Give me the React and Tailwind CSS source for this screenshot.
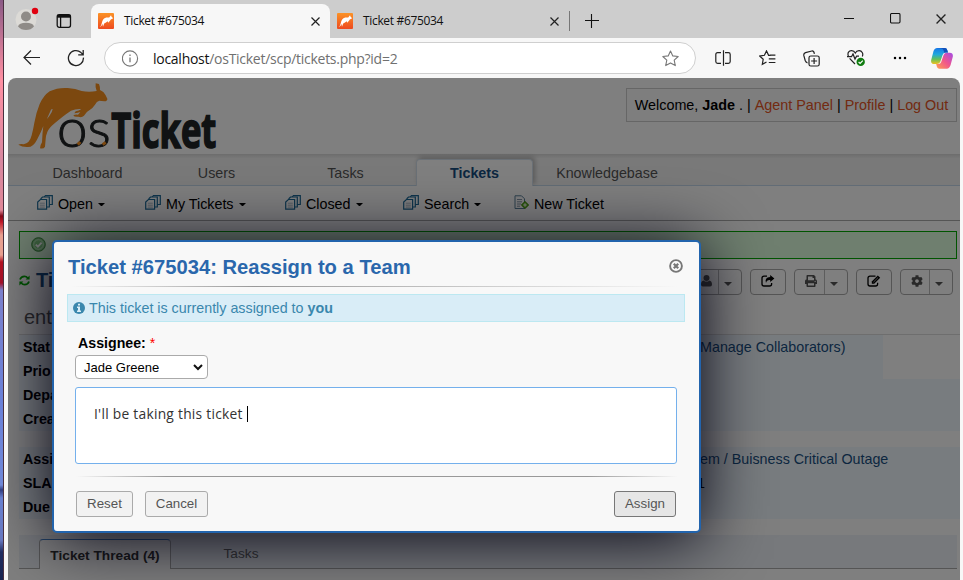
import React from "react";
import { FaPrint, FaCog } from "react-icons/fa";

const NAV = [
  { label: "Dashboard", box: "w-[129px]" },
  { label: "Users", box: "w-[129px]" },
  { label: "Tasks", box: "w-[129px]" },
  { label: "Tickets", box: "w-[117px] mx-1.5", active: true },
  { label: "Knowledgebase", box: "w-[136px]" },
];

function Favicon() {
  return (
    <svg width="16" height="16" viewBox="0 0 16 16" className="shrink-0">
      <defs>
        <linearGradient id="fav" x1="0" y1="0" x2="0" y2="1">
          <stop offset="0" stopColor="#fb9226" />
          <stop offset="1" stopColor="#ee4a20" />
        </linearGradient>
      </defs>
      <rect width="16" height="16" rx="1" fill="url(#fav)" />
      <path d="M1.6 13.8C4 13 3.4 9 5.2 6.5C6.8 4.2 9 4.2 11.2 4.6L13 2.2L13.6 3.8L15.2 5.2L12.8 6.4C12 7.8 11 8.4 10.4 9.8L9.6 8.2L8 9.6L6.2 10.6L5 13.8L4.4 10.8C4 12.5 3 13.8 1.6 13.8Z" fill="#fff" />
    </svg>
  );
}

function CloseX({ size = 9 }) {
  return (
    <svg width={size} height={size} viewBox="0 0 9 9" stroke="#222" strokeWidth="1.2">
      <path d="M.5 .5L8.5 8.5M8.5 .5L.5 8.5" />
    </svg>
  );
}

function Caret({ className }) {
  return (
    <svg width="8" height="4" viewBox="0 0 8 4" className={className} fill="currentColor"><path d="M0 0H8L4 4Z" /></svg>
  );
}

function TabBar() {
  return (
    <div className="flex h-[38px] shrink-0 items-end bg-[#cdcdcd]">
      <div className="flex h-[38px] w-[87px] shrink-0 items-center">
        <svg width="24" height="24" viewBox="0 0 24 24" className="ml-[11px]">
          <circle cx="11" cy="12.5" r="10.5" fill="#dcdad6" />
          <circle cx="11" cy="9.5" r="5" fill="#8f8b87" />
          <path d="M3 19.5Q4 15.8 11 15.8Q18 15.8 19 19.5Q16 23 11 23Q6 23 3 19.5Z" fill="#8f8b87" />
          <circle cx="20" cy="4" r="3.2" fill="#e0000f" />
        </svg>
        <svg width="16" height="16" viewBox="0 0 16 16" className="ml-[17px] mt-1" fill="none" stroke="#111" strokeWidth="1.3">
          <rect x="1.2" y="1.7" width="13.3" height="12.6" rx="2" />
          <path d="M1.2 3.2H14.5" strokeWidth="3" />
          <path d="M4.6 4V14" />
        </svg>
      </div>
      <div className="flex h-[34px] w-[239px] shrink-0 items-center rounded-t-lg bg-[#f7f7f7] pl-[7px] pr-2.5">
        <Favicon />
        <span className="ml-2.5 grow whitespace-nowrap text-[12px] tracking-[-0.33px] text-[#111]">Ticket #675034</span>
        <CloseX />
      </div>
      <div className="flex h-[34px] w-[239px] shrink-0 items-center pl-[7px] pr-2.5">
        <Favicon />
        <span className="ml-2.5 grow whitespace-nowrap text-[12px] tracking-[-0.33px] text-[#111]">Ticket #675034</span>
        <CloseX />
      </div>
      <div className="mb-[7px] h-5 w-px bg-[#777]" />
      <svg width="14" height="14" viewBox="0 0 14 14" className="mb-[10px] ml-[15px]" stroke="#111" strokeWidth="1.1">
        <path d="M0 6.5H14M6.5 0V14" />
      </svg>
      <div className="mb-[14px] ml-auto mr-[17px] flex items-center">
        <svg width="10" height="11" viewBox="0 0 10 11"><path d="M0 5.5H10" stroke="#111" /></svg>
        <svg width="11" height="11" viewBox="0 0 11 11" className="ml-9"><rect x=".5" y=".5" width="9.5" height="9.5" rx="1.2" fill="none" stroke="#111" strokeWidth="1.1" /></svg>
        <span className="ml-[35px]"><CloseX size={10} /></span>
      </div>
    </div>
  );
}

function AddressBar() {
  return (
    <div className="flex h-10 shrink-0 items-center bg-[#f7f7f7] pl-[19px]">
      <svg width="17" height="16" viewBox="0 0 17 16" fill="none" stroke="#222" strokeWidth="1.2">
        <path d="M17 7.5H1.2M8 .5L1 7.5L8 14.5" />
      </svg>
      <svg width="18" height="18" viewBox="0 0 18 18" className="ml-[27px]" fill="none" stroke="#222" strokeWidth="1.3">
        <path d="M16.4 8.6A7.5 7.5 0 1 1 14 3.6L16 5.6M16.2 1V5.9H11.2" />
      </svg>
      <div className="ml-[19px] flex h-8 w-[592px] items-center rounded-full border border-[#cfcfcf] bg-white pl-[17px] pr-4">
        <svg width="17" height="17" viewBox="0 0 17 17" fill="none" stroke="#777" strokeWidth="1.1">
          <circle cx="8" cy="8.5" r="7.6" />
          <path d="M8 7.5V12.2M8 4.5V6" strokeWidth="1.3" />
        </svg>
        <span className="ml-[14px] grow whitespace-nowrap text-[14px] tracking-[-0.27px] text-[#707070]">
          <span className="text-[#111]">localhost</span>/osTicket/scp/tickets.php?id=2
        </span>
        <svg width="17" height="17" viewBox="0 0 17 17" fill="none" stroke="#777" strokeWidth="1.1" strokeLinejoin="round">
          <path d="M8.5 1L10.8 5.9L16.2 6.5L12.2 10.2L13.3 15.6L8.5 12.9L3.7 15.6L4.8 10.2L.8 6.5L6.2 5.9Z" />
        </svg>
      </div>
      <svg width="16" height="16" viewBox="0 0 16 16" className="ml-[19px]" fill="none" stroke="#222" strokeWidth="1.2">
        <path d="M6 2.6H2.6Q.8 2.6 .8 4.4V11.6Q.8 13.4 2.6 13.4H6M10 2.6H13.4Q15.2 2.6 15.2 4.4V11.6Q15.2 13.4 13.4 13.4H10M8.5 .3V15.7" />
      </svg>
      <svg width="17" height="16" viewBox="0 0 17 16" className="ml-7" fill="none" stroke="#222" strokeWidth="1.2">
        <path d="M11.5 5.3H9.6L7.5 .9L5.4 5.3L.7 6L4.2 9.3L3.3 14.3L7.5 12M10.8 5.2H16.4M9.8 8.9H16.4M9.8 12.5H16.4" />
      </svg>
      <svg width="17" height="17" viewBox="0 0 17 17" className="ml-[27px]" fill="none" stroke="#222" strokeWidth="1.2">
        <rect x="6" y="6" width="10.2" height="10" rx="1.8" />
        <path d="M11.1 8V14M8.1 11H14.1M4.5 12.8Q2.8 12.5 2.2 10.5L.8 5.4Q.5 3.2 2.5 2.6L8.8 1Q10.8.7 11.4 3.8" />
      </svg>
      <svg width="18" height="18" viewBox="0 0 18 18" className="ml-[27px]" fill="none" stroke="#222" strokeWidth="1.2">
        <path d="M1.6 7.7C-.2 3.8 2.2 1.5 4.6 1.6C6.6 1.7 7.8 3 8.3 4C8.9 2.8 10.4 1.6 12.3 1.7C14.7 1.9 16.7 4.5 15.3 7.4M0 7.7H4.5L6 5L8 10L9.6 7.2H12M2.6 9.4L8 15" />
        <circle cx="13.7" cy="12.9" r="4.2" fill="#107c10" stroke="none" />
        <path d="M11.6 13L13.1 14.4L15.8 11.6" stroke="#fff" />
      </svg>
      <svg width="14" height="4" viewBox="0 0 14 4" className="ml-7"><circle cx="2" cy="2" r="1.25" /><circle cx="7" cy="2" r="1.25" /><circle cx="12" cy="2" r="1.25" /></svg>
      <svg width="22" height="21" viewBox="0 0 22 21" className="ml-6">
        <defs>
          <linearGradient id="cpa" x1="0" y1="0" x2="0" y2="1">
            <stop offset="0" stopColor="#1877e8" /><stop offset=".4" stopColor="#20a8dc" /><stop offset=".7" stopColor="#62c05a" /><stop offset="1" stopColor="#f0c020" />
          </linearGradient>
          <linearGradient id="cpb" x1="1" y1="0" x2="0" y2="1">
            <stop offset="0" stopColor="#a24be8" /><stop offset=".5" stopColor="#f0568c" /><stop offset="1" stopColor="#ffa050" />
          </linearGradient>
        </defs>
        <path d="M6.2 0H14Q15.7 0 16.2 2L17 4.6H14.5Q12.3 4.8 11.6 7L9.2 14Q8.2 16 6 16H3.2Q-.5 16 .2 12L2.4 3.6Q3.4 .2 6.2 0Z" fill="url(#cpa)" />
        <path d="M15.8 20.8H8Q6.3 20.6 5.8 18.6L5.2 16H7.5Q9.5 15.8 10.2 14L12.6 7Q13.5 4.7 15.8 4.7H18.8Q22.4 4.8 21.8 8.8L19.6 17Q18.4 20.6 15.8 20.8Z" fill="url(#cpb)" />
        <path d="M6.2 0H14Q15.7 0 16.2 2L17 4.6H14.5L13.6 4.9L12.4 1.9Q11.8 .2 9.5 .2Z" fill="#1450b8" />
      </svg>
    </div>
  );
}

function Logo() {
  return (
    <svg width="200" height="69" viewBox="50 18 600 207" className="ml-[9px] mt-1 shrink-0 overflow-visible">
      <path d="M286 22L296 24Q300 34 299 42L309 48Q316 56 321 68Q322 75 312 76Q302 74 297 74Q289 76 284 86Q276 98 267 103Q257 108 251 119Q244 126 234 122Q222 124 219 118Q224 115 233 116L240 108Q228 112 222 112L226 106Q236 104 243 99Q226 98 212 104Q200 112 187 122Q174 132 163 142Q146 156 141 168Q136 180 136 190L134 212Q130 220 119 217Q120 206 125 199Q126 170 129 150Q133 134 147 120Q156 108 157 99Q152 98 150 106Q140 130 130 148Q122 170 110 191Q99 213 83 213Q66 214 54 206Q60 203 70 205Q88 202 94 178Q99 158 102 140Q108 108 118 84Q130 58 148 46Q172 34 202 36Q226 38 244 45Q266 50 289 45Q284 34 286 22Z" fill="#f8901f" />
      <text x="170" y="214" fontFamily="Lato, sans-serif" fontWeight="300" fontSize="162" textLength="161" lengthAdjust="spacingAndGlyphs" fill="#202426" stroke="#202426" strokeWidth="3">os</text>
      <path d="M232 206L240 198M307 206L316 199" stroke="#f8901f" strokeWidth="9" />
      <text x="333" y="215" fontFamily="'Open Sans', sans-serif" fontWeight="700" fontSize="144" textLength="315" lengthAdjust="spacingAndGlyphs" fill="#202426" stroke="#202426" strokeWidth="5">Ticket</text>
    </svg>
  );
}

function QueueIcon() {
  return (
    <svg width="16" height="15" viewBox="0 0 16 15" fill="#fff" stroke="#1c6a98" strokeWidth="1.2">
      <path d="M8.5 .6H15.3V9.5H7V2.2Z" />
      <path d="M5.5 2H12.3V12H4V3.6Z" />
      <path d="M3.4 4.5H9.6V14.2H.7V7Z" />
      <path d="M2.8 8.2H7.8M2.8 10.2H7.8M2.8 12.1H7.8" stroke="#9ab" strokeWidth=".8" />
    </svg>
  );
}

function QueueItem({ label, box }) {
  return (
    <div className={"flex items-center " + box}>
      <QueueIcon />
      <span className="ml-[5px] pt-0.5">{label}</span>
      <Caret className="ml-[5px] mt-[3px] h-[3.5px] w-[7px]" />
    </div>
  );
}

function UserIcon() {
  return (
    <svg width="11" height="12" viewBox="0 0 11 12" fill="currentColor" className="ml-1">
      <circle cx="5.5" cy="3" r="3" />
      <path d="M2.6 5.4Q5.5 7.8 8.4 5.4Q11 5.8 11 9.6Q11 11.6 9.2 11.6H1.8Q0 11.6 0 9.6Q0 5.8 2.6 5.4Z" />
    </svg>
  );
}

function ShareIcon() {
  return (
    <svg width="14" height="12" viewBox="0 0 14 12" fill="none" stroke="currentColor" strokeWidth="1.3">
      <path d="M6 1.2H3Q1 1.2 1 3.2V9Q1 11 3 11H8.6Q10.6 11 10.6 9V8" />
      <path d="M9.2 0L13.4 3.4L9.2 6.9V4.9Q5.6 4.6 5 8Q3.2 2.4 9.2 2Z" fill="currentColor" stroke="none" />
    </svg>
  );
}

function EditIcon() {
  return (
    <svg width="14" height="12" viewBox="0 0 14 12" fill="none" stroke="currentColor" strokeWidth="1.3">
      <path d="M8.5 1.2H3Q1 1.2 1 3.2V9Q1 11 3 11H8.6Q10.6 11 10.6 9V7.8" />
      <path d="M4.8 8.8V6.4L10.8 .4L13.2 2.8L7.2 8.8Z" fill="currentColor" stroke="none" />
      <path d="M6.4 7.2L11 2.6" stroke="#fff" strokeWidth=".6" />
    </svg>
  );
}

function RefreshIcon() {
  return (
    <svg width="11" height="11" viewBox="0 0 11 11" fill="none" stroke="#0a0" strokeWidth="1.7">
      <path d="M1 4.6Q2 1.4 5.4 1.4Q7.4 1.4 8.8 3M10 6.4Q9 9.6 5.6 9.6Q3.6 9.6 2.2 8" />
      <path d="M10.6 .6V4.6H6.6ZM.4 10.4V6.4H4.4Z" fill="#0a0" stroke="none" />
    </svg>
  );
}

function ToolButton({ icon, caret, box }) {
  return (
    <div className={"flex h-[26px] rounded border border-[#aaa] text-[#555] " + box}>
      <span className="flex grow items-center justify-center pb-0.5">{icon}</span>
      {caret && (
        <span className="flex w-[23px] items-center justify-center border-l border-[#bbb] pr-1"><Caret className="mt-[3px]" /></span>
      )}
    </div>
  );
}

function InfoRow({ label, right, patch }) {
  return (
    <div className="flex h-6 items-center whitespace-nowrap">
      <span className="w-[677px] pl-1 font-bold text-black">{label}</span>
      {right}
      {patch}
    </div>
  );
}

function TicketPage() {
  return (
    <div className="flex h-full flex-col bg-white text-[14.3px] leading-none text-black">
      <div className="flex h-[76px] shrink-0 items-start justify-between">
        <Logo />
        <div className="mr-[3px] mt-[10px] flex h-[34px] w-[331px] items-center justify-center whitespace-pre border border-[#ccc] bg-[#fcfcfc] text-[14.37px]">
          Welcome, <b>Jade</b> . | <span className="text-[#e65524]">Agent Panel</span> | <span className="text-[#e65524]">Profile</span> | <span className="text-[#e65524]">Log Out</span>
        </div>
      </div>
      <div className="flex h-8 shrink-0 items-end border-b border-[#c5d9ec] bg-linear-to-b from-[#dadada] via-[#f3f3f3] via-15% to-[#f3f3f3] pl-[15px] text-[#555]">
        {NAV.map((n) =>
          n.active ? (
            <div key={n.label} className={"-mb-px flex h-[27px] items-center justify-center rounded-t border border-b-0 border-[#d5e0ec] bg-white pt-px font-bold text-[#184e81] shadow-[2px_-2px_5px_rgba(0,0,0,0.25)] [clip-path:inset(-6px_-8px_0_-6px)] " + n.box}>{n.label}</div>
          ) : (
            <div key={n.label} className={"flex h-[26px] items-center justify-center pt-0.5 " + n.box}>{n.label}</div>
          )
        )}
      </div>
      <div className="flex h-[35px] shrink-0 items-center border-b border-[#aaa] pl-[29px]">
        <QueueItem label="Open" box="w-[108px]" />
        <QueueItem label="My Tickets" box="w-[140px]" />
        <QueueItem label="Closed" box="w-[118px]" />
        <QueueItem label="Search" box="w-[111px]" />
        <div className="flex items-center">
          <svg width="15" height="15" viewBox="0 0 15 15">
            <path d="M1 .8H7.5L10.5 3.8V13.5H1Z" fill="#fff" stroke="#5b8098" />
            <path d="M3 4.5H8M3 6.8H8M3 9H7M3 11.2H6" stroke="#89a" />
            <path d="M11 6.2L14.8 10L11 13.8L7.2 10Z" fill="#50b010" stroke="#3a7a08" strokeWidth=".6" />
            <path d="M11 8.2V11.8M9.2 10H12.8" stroke="#fff" strokeWidth="1.1" />
          </svg>
          <span className="ml-[5px] pt-0.5">New Ticket</span>
        </div>
      </div>
      <div className="ml-[11px] mr-[3px] mt-[10px] flex h-7 shrink-0 items-center border border-[#0a0] bg-[#dfffdf] pl-[11px]">
        <svg width="15" height="15" viewBox="0 0 15 15" className="-mt-px">
          <circle cx="7.5" cy="7.5" r="6.8" fill="#7cc67c" stroke="#3c8a3c" />
          <circle cx="7.5" cy="7.5" r="4.8" fill="none" stroke="#d8f4d8" strokeWidth=".7" />
          <path d="M4.8 7.6L6.9 9.7L10.6 5.6" fill="none" stroke="#fff" strokeWidth="1.8" />
        </svg>
      </div>
      <div className="ml-[11px] mr-[7px] mt-[10px] flex h-[26px] shrink-0 items-center justify-between">
        <div className="flex items-center pb-1 text-[20px] font-bold text-[#184e81]">
          <RefreshIcon />
          <span className="ml-1.5">Ti</span>
        </div>
        <div className="flex gap-2">
          <ToolButton caret box="w-[53px]" icon={<UserIcon />} />
          <ToolButton box="w-9 text-black" icon={<ShareIcon />} />
          <ToolButton caret box="w-[54px]" icon={<FaPrint size={12} className="ml-0.5" />} />
          <ToolButton box="w-9 text-black" icon={<EditIcon />} />
          <ToolButton caret box="w-[53px]" icon={<FaCog size={12} className="ml-[3px]" />} />
        </div>
      </div>
      <div className="ml-4 mt-3 h-[27px] shrink-0 text-[20px] leading-5 text-[#555]">ent</div>
      <div className="ml-[11px] shrink-0 border-t border-[#ddd] bg-[#f1f9ff]">
        <InfoRow
          label="Stat"
          right={<span className="w-[188px] text-[#184e81]">(Manage Collaborators)</span>}
          patch={<span className="mt-5 h-11 w-[77px] grow bg-white" />}
        />
        <InfoRow label="Prio" />
        <InfoRow label="Depa" />
        <InfoRow label="Crea" />
      </div>
      <div className="ml-[11px] mt-4 shrink-0 bg-[#f1f9ff]">
        <InfoRow label="Assi" right={<span className="pl-1 text-[#184e81]">em / Buisness Critical Outage</span>} />
        <InfoRow label="SLA" right={<span className="pl-px">1</span>} />
        <InfoRow label="Due" />
      </div>
      <div className="ml-[11px] mr-[3px] mt-4 flex h-[34px] shrink-0 items-end border-b border-[#aaa] bg-[#eef3f8] pl-5 text-[13.7px]">
        <div className="-mb-px flex h-[30px] w-[132px] items-center justify-center rounded-t border border-b-0 border-[#aaa] border-t-[#4682c8] bg-white pt-0.5 font-bold text-[#333]">Ticket Thread (4)</div>
        <div className="flex h-[30px] w-[140px] items-center justify-center pt-0.5 text-[#666]">Tasks</div>
      </div>
    </div>
  );
}

function Dialog() {
  return (
    <div className="absolute left-[44px] top-[162px] flex h-[293px] w-[649px] flex-col rounded-[5px] border-2 border-[#2264ad] bg-[#f8f8f8] text-[14.3px] leading-none shadow-[0_5px_66px_#001]">
      <div className="ml-[14px] mr-4 mt-[13px] flex h-6 shrink-0 items-center justify-between">
        <h3 className="whitespace-nowrap text-[20.2px] font-bold text-[#2a67ac]">Ticket #675034: Reassign to a Team</h3>
        <svg width="14" height="14" viewBox="0 0 14 14" className="-mt-0.5" fill="none" stroke="#777">
          <circle cx="7" cy="7" r="5.9" strokeWidth="1.9" />
          <path d="M4.8 4.8L9.2 9.2M9.2 4.8L4.8 9.2" strokeWidth="2.3" />
        </svg>
      </div>
      <div className="ml-[18px] mr-5 mt-[7px] h-px shrink-0 bg-linear-to-r from-transparent via-[#999] via-30% to-transparent" />
      <div className="ml-[13px] mr-[14px] mt-[7px] flex h-7 shrink-0 items-center whitespace-pre border border-[#bce8f1] bg-[#d9edf7] pl-[5px] text-[#3a87ad]">
        <svg width="12" height="12" viewBox="0 0 12 12" className="mr-1 shrink-0">
          <circle cx="6" cy="6" r="6" fill="#3a87ad" />
          <path d="M5 1.8H7V3.5H5ZM4 4.6H7V8.6H8V10H4V8.6H5V6H4Z" fill="#d9edf7" />
        </svg>
        This ticket is currently assigned to <b>you</b>
      </div>
      <div className="ml-6 mt-[13px] flex h-4 shrink-0 items-center whitespace-pre text-[14.2px] font-bold">
        Assignee: <span className="font-normal text-[#f00]">*</span>
      </div>
      <div className="ml-[21px] mt-1 flex h-6 w-[133px] shrink-0 items-center justify-between rounded-[4px] border border-[#aaa] bg-white pl-2 pr-1 text-[13px]">
        Jade Greene
        <svg width="10" height="7" viewBox="0 0 10 7" fill="none" stroke="#111" strokeWidth="2"><path d="M1 1L5 5L9 1" /></svg>
      </div>
      <div className="ml-[21px] mt-2 flex h-[77px] w-[602px] shrink-0 items-start rounded-[3px] border border-[#74b0ec] bg-white pl-[18px] pt-[18px]">
        <span className="whitespace-nowrap font-['Open_Sans','Noto_Sans',sans-serif] text-[13.8px] leading-4 tracking-[0.26px] text-[#333]">I'll be taking this ticket</span>
        <span className="ml-1 h-4 w-px bg-black" />
      </div>
      <div className="ml-[22px] mr-[21px] mt-3 h-px shrink-0 bg-[linear-gradient(to_right,transparent,#999_15%,#999_85%,transparent)]" />
      <div className="ml-[22px] mr-[23px] mt-[14px] flex text-[13.33px] text-[#555]">
        <div className="flex h-[26px] w-[57px] items-center justify-center rounded-[3px] border border-[#aaa] bg-[#f2f2f2] pb-px">Reset</div>
        <div className="ml-3 flex h-[26px] w-[63px] items-center justify-center rounded-[3px] border border-[#aaa] bg-[#f2f2f2] pb-px">Cancel</div>
        <div className="ml-auto flex h-[26px] w-[62px] items-center justify-center rounded-[3px] border border-[#777] bg-[#e6e6e6] pb-px">Assign</div>
      </div>
    </div>
  );
}

export default function App() {
  return (
    <div className="flex h-[580px] w-[963px] overflow-hidden bg-[#f7f7f7] font-['Open_Sans','Noto_Sans',sans-serif]">
      <div className="w-1 shrink-0 border-r border-[#4a3040] bg-[linear-gradient(#8a5a86_0px,#ff90a2_80px,#d888a0_160px,#e08898_210px,#800818_216px,#c01828_222px,#e8a090_235px,#e8a090_255px,#b01020_262px,#a01028_283px,#7c80cc_290px,#6a80d8_400px,#7088d8_485px,#303c80_490px,#6880d0_498px,#6878c0_540px,#202c60_552px,#182450_580px)]" />
      <div className="flex min-w-0 grow flex-col">
        <TabBar />
        <AddressBar />
        <div className="relative ml-1 mr-[3px] h-[502px] overflow-hidden rounded-t-lg font-['Liberation_Sans',Arial,sans-serif]">
          <TicketPage />
          <div className="absolute inset-0 bg-black/50" />
          <Dialog />
        </div>
      </div>
    </div>
  );
}
